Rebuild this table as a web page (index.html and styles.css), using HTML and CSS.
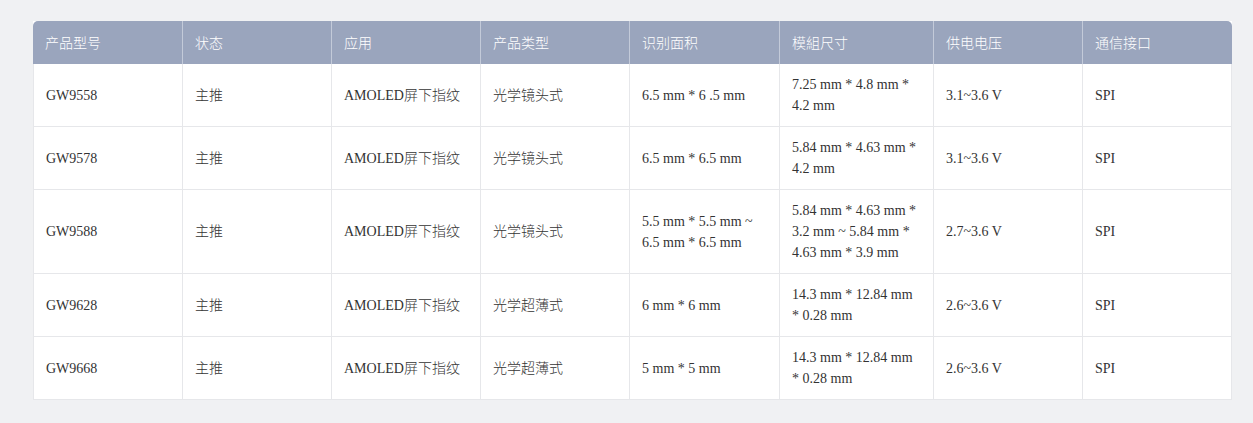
FILE: index.html
```html
<!DOCTYPE html>
<html lang="zh">
<head>
<meta charset="utf-8">
<link rel="stylesheet" href="styles.css">
</head>
<body>
<div class="wrap">
<table class="spec">
<colgroup>
<col class="c150"><col class="c149"><col class="c149"><col class="c149"><col class="c150"><col class="c154"><col class="c149"><col class="c149">
</colgroup>
<thead>
<tr><th>产品型号</th><th>状态</th><th>应用</th><th>产品类型</th><th>识别面积</th><th>模組尺寸</th><th>供电电压</th><th>通信接口</th></tr>
</thead>
<tbody>
<tr><td>GW9558</td><td>主推</td><td>AMOLED屏下指纹</td><td>光学镜头式</td><td>6.5 mm * 6 .5 mm</td><td>7.25 mm * 4.8 mm * 4.2 mm</td><td>3.1~3.6 V</td><td>SPI</td></tr>
<tr><td>GW9578</td><td>主推</td><td>AMOLED屏下指纹</td><td>光学镜头式</td><td>6.5 mm * 6.5 mm</td><td>5.84 mm * 4.63 mm * 4.2 mm</td><td>3.1~3.6 V</td><td>SPI</td></tr>
<tr><td>GW9588</td><td>主推</td><td>AMOLED屏下指纹</td><td>光学镜头式</td><td>5.5 mm * 5.5 mm ~ 6.5 mm * 6.5 mm</td><td>5.84 mm * 4.63 mm * 3.2 mm ~ 5.84 mm * 4.63 mm * 3.9 mm</td><td>2.7~3.6 V</td><td>SPI</td></tr>
<tr><td>GW9628</td><td>主推</td><td>AMOLED屏下指纹</td><td>光学超薄式</td><td>6 mm * 6 mm</td><td>14.3 mm * 12.84 mm * 0.28 mm</td><td>2.6~3.6 V</td><td>SPI</td></tr>
<tr><td>GW9668</td><td>主推</td><td>AMOLED屏下指纹</td><td>光学超薄式</td><td>5 mm * 5 mm</td><td>14.3 mm * 12.84 mm * 0.28 mm</td><td>2.6~3.6 V</td><td>SPI</td></tr>
</tbody>
</table>
</div>
</body>
</html>
```
FILE: styles.css
```css
html, body {
  margin: 0;
  padding: 0;
  background: #f0f1f3;
}
.wrap {
  padding: 21px 20px 23px 33px;
}
.spec {
  width: 1199px;
  table-layout: fixed;
  border-collapse: separate;
  border-spacing: 0;
  background: #fff;
  font-family: "Liberation Serif", "Noto Sans CJK SC", serif;
  font-size: 14px;
  line-height: 21px;
  color: #333;
}
.c149 { width: 149px; }
.c150 { width: 150px; }
.c154 { width: 154px; }
.spec th {
  background: #9aa5bd;
  color: #fff;
  font-family: "Noto Sans CJK SC", "Noto Sans", sans-serif;
  font-weight: 300;
  text-align: left;
  padding: 11px 12px 11px 12px;
  border-right: 1px solid #c3cad9;
}
.spec th:first-child { border-top-left-radius: 5px; }
.spec th:last-child { border-top-right-radius: 5px; border-right: none; }
.spec td {
  padding: 10px 12px 10px 12px;
  font-weight: 300;
  border-right: 1px solid #e6e7ea;
  border-bottom: 1px solid #e6e7ea;
  vertical-align: middle;
}
.spec td:first-child { border-left: 1px solid #e6e7ea; }
.spec td:last-child { border-right: 1px solid #e6e7ea; }
```
